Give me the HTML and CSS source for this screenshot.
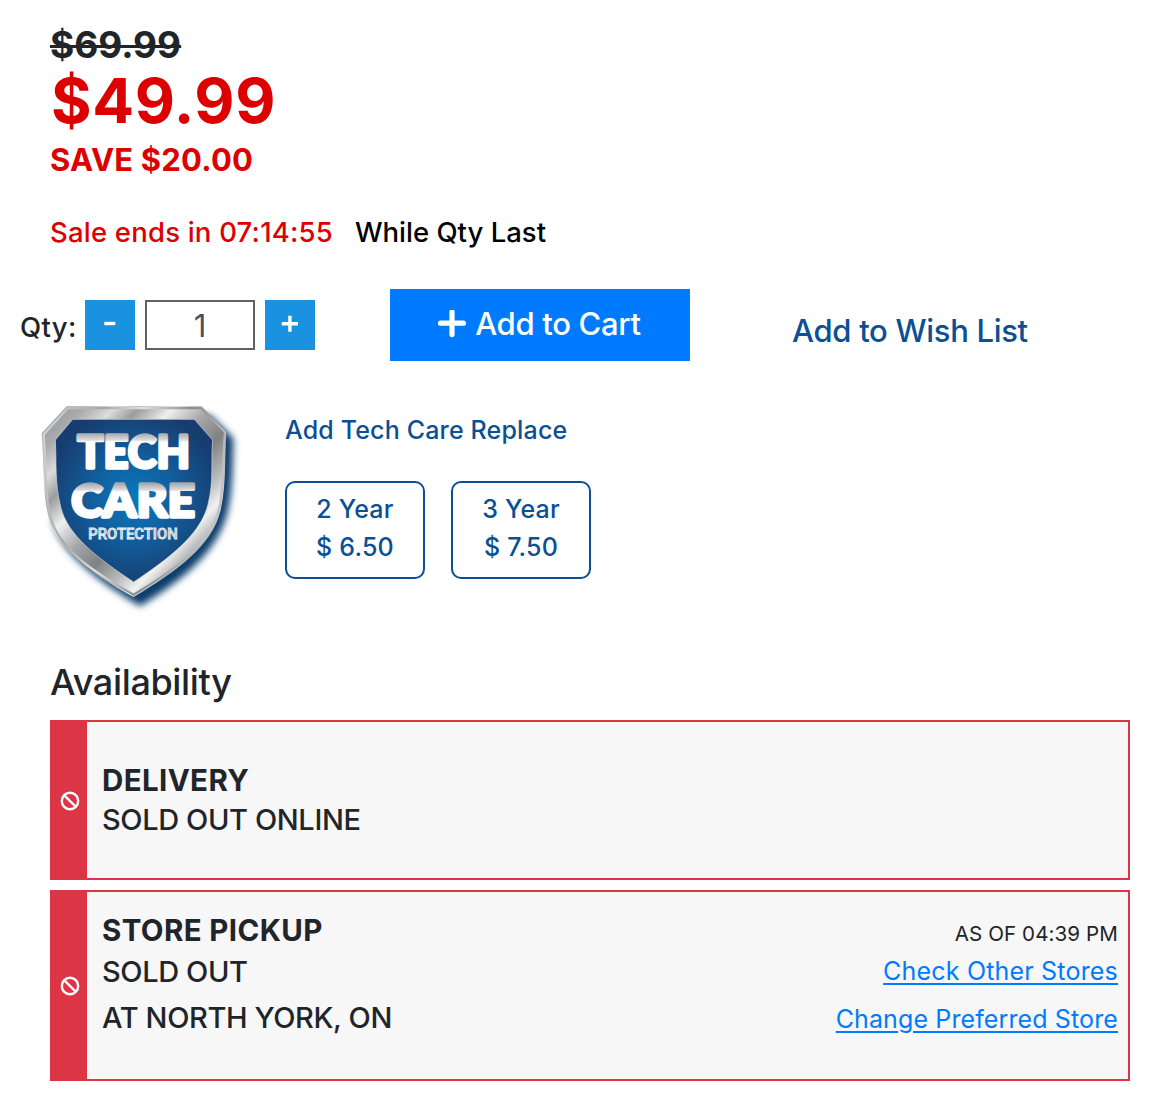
FILE: index.html
```html
<!DOCTYPE html>
<html lang="en">
<head>
<meta charset="utf-8">
<title>Product purchase options</title>
<link rel="stylesheet" href="styles.css">
</head>
<body>
<main class="product">
  <section class="pricing">
    <div class="price-old"><s>$69.99</s></div>
    <div class="price-now">$49.99</div>
    <div class="price-save">SAVE $20.00</div>
    <div class="sale-note"><span class="sale-ends">Sale ends in 07:14:55</span><span class="sale-qty">While Qty Last</span></div>
  </section>

  <section class="buy">
    <div class="qty">
      <label class="qty-label" for="qty">Qty:</label>
      <button class="qty-step" type="button" aria-label="Decrease"><svg width="50" height="50" viewBox="0 0 50 50"><path d="M19.3 23.5h11" stroke="#fff" stroke-width="3.4"/></svg></button>
      <input class="qty-input" id="qty" value="1">
      <button class="qty-step" type="button" aria-label="Increase"><svg width="50" height="50" viewBox="0 0 50 50"><path d="M16.8 23.8h16.2M24.9 15.8v16" stroke="#fff" stroke-width="3.4"/></svg></button>
    </div>
    <button class="cart" type="button"><svg class="cart-icon" width="28" height="28" viewBox="0 0 28 28"><path d="M2.6 13.2h22.8M14 1.8v22.8" stroke="#fff" stroke-width="5.2" stroke-linecap="round"/></svg><span>Add to Cart</span></button>
    <a class="wish">Add to Wish List</a>
  </section>

  <section class="care">
    <svg class="shield" width="220" height="220" viewBox="0 0 660 660" role="img" aria-label="Tech Care Protection">
      <defs>
        <linearGradient id="steel" x1="0" y1="0" x2="1" y2="1">
          <stop offset="0" stop-color="#8d8f91"/><stop offset=".12" stop-color="#a9abad"/><stop offset=".2" stop-color="#dcdcdc"/>
          <stop offset=".27" stop-color="#9a9c9e"/><stop offset=".36" stop-color="#efefef"/><stop offset=".46" stop-color="#a5a7a9"/>
          <stop offset=".56" stop-color="#7f8183"/><stop offset=".66" stop-color="#b9bbbd"/><stop offset=".73" stop-color="#f2f2f2"/>
          <stop offset=".82" stop-color="#939597"/><stop offset="1" stop-color="#c8cacc"/>
        </linearGradient>
        <linearGradient id="rim" x1="0" y1="0" x2="1" y2=".3">
          <stop offset="0" stop-color="#d8d8d8"/><stop offset=".3" stop-color="#a4a6a8"/><stop offset=".5" stop-color="#e2e2e2"/>
          <stop offset=".75" stop-color="#8a8c8e"/><stop offset="1" stop-color="#bfc1c3"/>
        </linearGradient>
        <radialGradient id="field" gradientUnits="userSpaceOnUse" cx="310" cy="310" r="265">
          <stop offset="0" stop-color="#0b78bd"/><stop offset=".45" stop-color="#11609f"/><stop offset="1" stop-color="#173d70"/>
        </radialGradient>
        <linearGradient id="chrome1" gradientUnits="userSpaceOnUse" x1="0" y1="113" x2="0" y2="224">
          <stop offset="0" stop-color="#a0a2a5"/><stop offset=".2" stop-color="#dcdddf"/><stop offset=".25" stop-color="#fff"/>
        </linearGradient>
        <linearGradient id="chrome2" gradientUnits="userSpaceOnUse" x1="0" y1="263" x2="0" y2="372">
          <stop offset="0" stop-color="#a0a2a5"/><stop offset=".2" stop-color="#dcdddf"/><stop offset=".25" stop-color="#fff"/>
        </linearGradient>
        <filter id="soft" x="-10%" y="-10%" width="120%" height="120%"><feGaussianBlur stdDeviation="11"/></filter>
      </defs>
      <path d="M138 60H540L610 130C608 215 608 290 592 355C562 465 475 545 330 634C190 550 95 470 70 385Z" fill="#0d3d6d" filter="url(#soft)"/>
      <path d="M110 34H515L590 109C583 190 590 262 572 345C546 455 440 528 311 606C178 532 82 465 56 368C35 285 43 195 35 115Z" fill="url(#steel)"/>
      <path d="M114 39H512L585 111C578 190 585 262 567 343C542 448 438 522 311 599C182 527 87 460 61 366C41 285 48 195 41 118Z" fill="none" stroke="url(#rim)" stroke-width="7"/>
      <path d="M128 73H493L548 135C542 205 552 255 534 328C512 418 420 488 311 561C200 488 112 420 92 335C74 265 80 205 76 135Z" fill="url(#field)" stroke="#d5d7d9" stroke-width="2"/>
      <g font-family="Lato, sans-serif" font-weight="900" font-size="138" stroke-width="10" stroke-linejoin="round">
        <text x="142" y="218" textLength="338" lengthAdjust="spacingAndGlyphs" fill="url(#chrome1)" stroke="url(#chrome1)">TECH</text>
        <text x="124" y="366" textLength="371" lengthAdjust="spacingAndGlyphs" fill="url(#chrome2)" stroke="url(#chrome2)">CARE</text>
      </g>
      <text x="175" y="432" textLength="268" lengthAdjust="spacingAndGlyphs" font-family="Roboto, sans-serif" font-weight="500" font-size="46" fill="#aebfd0" stroke="#eef2f6" stroke-width="2.4">PROTECTION</text>
    </svg>
    <div class="care-body">
      <div class="care-title">Add Tech Care Replace</div>
      <div class="care-options">
        <button class="care-option" type="button"><span>2 Year</span><span>$ 6.50</span></button>
        <button class="care-option" type="button"><span>3 Year</span><span>$ 7.50</span></button>
      </div>
    </div>
  </section>

  <section class="availability">
    <h2 class="heading">Availability</h2>
    <article class="stock stock-delivery">
      <div class="stock-flag"><svg width="20" height="20" viewBox="0 0 20 20"><path d="M4.3 4.3l11.4 11.4" stroke="#fff" stroke-width="2.4"/><circle cx="10" cy="10" r="8.2" fill="none" stroke="#fff" stroke-width="2.4"/></svg></div>
      <div class="stock-text">
        <strong class="stock-title">DELIVERY</strong>
        <span>SOLD OUT ONLINE</span>
      </div>
    </article>
    <article class="stock stock-pickup">
      <div class="stock-flag"><svg width="20" height="20" viewBox="0 0 20 20"><path d="M4.3 4.3l11.4 11.4" stroke="#fff" stroke-width="2.4"/><circle cx="10" cy="10" r="8.2" fill="none" stroke="#fff" stroke-width="2.4"/></svg></div>
      <div class="stock-text">
        <strong class="stock-title">STORE PICKUP</strong>
        <span>SOLD OUT</span>
        <span class="stock-place">AT NORTH YORK, ON</span>
      </div>
      <div class="stock-links">
        <span class="as-of">AS OF 04:39 PM</span>
        <a class="link check">Check Other Stores</a>
        <a class="link change">Change Preferred Store</a>
      </div>
    </article>
  </section>
</main>
</body>
</html>
```
FILE: styles.css
```css
* { box-sizing: border-box; }
body { margin: 0; background: #fff; color: #212529; font-family: Inter, "Liberation Sans", sans-serif; }
button { padding: 0; border: 0; font: inherit; }
.product { width: 1174px; height: 1120px; padding: 24px 44px 0 50px; overflow: hidden; white-space: nowrap; }

.price-old { font-size: 37px; line-height: 41px; font-weight: 700; }
.price-old s { text-decoration-thickness: 3px; }
.price-now { padding-left: 1px; font-size: 62px; line-height: 72px; font-weight: 700; letter-spacing: 0.6px; color: #d00; }
.price-save { margin-top: 1px; font-size: 31px; line-height: 44px; font-weight: 700; letter-spacing: 0.2px; color: #d00; }
.sale-note { display: flex; gap: 22px; margin-top: 30px; font-size: 27.5px; line-height: 40px; font-weight: 500; }
.sale-ends { letter-spacing: 0.21px; color: #d00; }
.sale-qty { color: #000; }

.buy { display: flex; align-items: center; height: 72px; margin: 37px 0 0 -30px; }
.qty { display: flex; align-items: center; width: 370px; }
.qty-label { width: 65px; padding-top: 3px; font-size: 27.5px; line-height: 40px; font-weight: 500; letter-spacing: 0.4px; }
.qty-step { width: 50px; height: 50px; background: #1a92e0; }
.qty-step svg { display: block; }
.qty-input { width: 110px; height: 50px; margin: 0 10px; padding: 0; border: 2px solid #5f6165; background: #fff; color: #495057; font: 400 31px/46px Inter, sans-serif; text-align: center; border-radius: 0; }
.cart { display: flex; align-items: center; justify-content: center; gap: 9px; width: 300px; height: 72px; padding: 0 1px 3px 0; background: #007bff; color: #fff; font-size: 31px; line-height: 44px; font-weight: 450; letter-spacing: -0.3px; }
.wish { margin: 12px 0 0 102px; font-size: 31px; line-height: 44px; font-weight: 450; letter-spacing: -0.3px; color: #0b4f94; }

.care { display: flex; gap: 35px; margin: 34px 0 0 -20px; height: 220px; }
.care-body { padding-top: 16px; color: #0b4f94; font-size: 25px; line-height: 38px; font-weight: 500; letter-spacing: 0.16px; }
.care-options { display: flex; gap: 26px; margin-top: 32px; }
.care-option { display: flex; flex-direction: column; align-items: center; width: 140px; height: 98px; padding-top: 7px; border: 2px solid #0b4f94; border-radius: 10px; background: #fff; color: inherit; letter-spacing: 0.2px; }

.heading { margin: 44px 0 15px; font-size: 36px; line-height: 46px; font-weight: 500; letter-spacing: -0.35px; }
.stock { display: flex; width: 1080px; border: 2px solid #dc3545; background: #f7f7f7; font-size: 29px; font-weight: 450; letter-spacing: -0.38px; }
.stock + .stock { margin-top: 10px; }
.stock-delivery { height: 160px; }
.stock-pickup { height: 191px; }
.stock-flag { display: flex; align-items: center; justify-content: center; width: 35px; padding-top: 1px; background: #dc3545; }
.stock-text { display: flex; flex-direction: column; padding-left: 15px; line-height: 40px; }
.stock-title { font-size: 29.5px; font-weight: 700; letter-spacing: 0.38px; }
.stock-delivery .stock-text { padding-top: 38px; }
.stock-pickup .stock-text { padding-top: 18px; line-height: 41px; }
.stock-text .stock-place { line-height: 51px; }
.stock-links { display: flex; flex-direction: column; align-items: flex-end; margin-left: auto; padding: 23px 10px 0 0; font-weight: 400; }
.as-of { font-size: 20.6px; line-height: 37px; letter-spacing: 0.08px; }
.link { font-size: 25px; line-height: 38px; letter-spacing: 0.19px; color: #007bff; text-decoration: underline; text-decoration-thickness: 2px; text-underline-offset: 3px; }
.change { margin-top: 10px; letter-spacing: 0.12px; }
```
